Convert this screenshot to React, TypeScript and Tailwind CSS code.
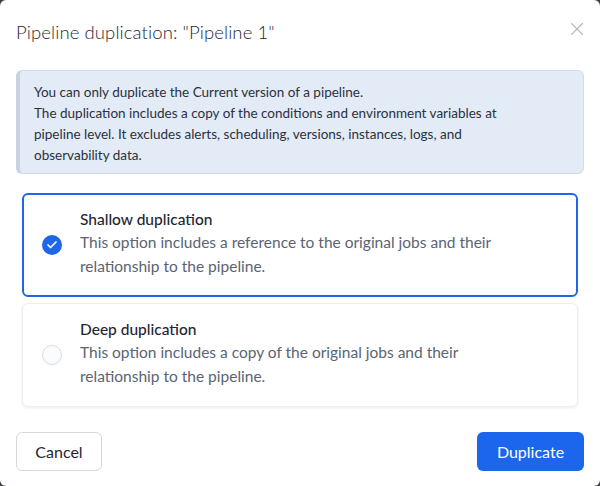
import { X, Check } from "lucide-react"

const options = [
  {
    title: "Shallow duplication",
    description: "This option includes a reference to the original jobs and their relationship to the pipeline.",
    selected: true,
  },
  {
    title: "Deep duplication",
    description: "This option includes a copy of the original jobs and their relationship to the pipeline.",
    selected: false,
  },
]

export default function App() {
  return (
    <div className="w-[600px] h-[486px] bg-[#3a3f47]" style={{ fontFamily: "Lato, 'Noto Sans', sans-serif" }}>
      <div className="w-full h-full bg-white rounded-md px-4 flex flex-col">
        <div className="flex items-center justify-between h-[62px] pt-1">
          <h1 className="text-[18.5px] font-light text-[#1f2633] tracking-[0.1px]">Pipeline duplication: "Pipeline 1"</h1>
          <X className="w-[22px] h-[22px] text-[#b5b9c0] -mr-1 -mt-2" strokeWidth={1.2} />
        </div>

        <div className="mt-[8px] h-[104px] rounded-md bg-[#e3ebf7] border border-[#d3dcea] border-l-4 border-l-[#c8d2e0] pl-[14px] pr-4 pt-[11px] text-[13.5px] leading-[21px] text-[#2a3140]">
          <div className="w-[480px]">
            You can only duplicate the Current version of a pipeline.
            <br />
            The duplication includes a copy of the conditions and environment variables at pipeline level. It excludes alerts, scheduling, versions, instances, logs, and observability data.
          </div>
        </div>

        <div className="mt-[19px] mx-[6px] flex flex-col gap-[6px]">
          {options.map((o) => (
            <div
              key={o.title}
              className={
                o.selected
                  ? "h-[104px] rounded-md border-2 border-[#1f67e8] flex items-center pl-[18px] pr-4"
                  : "h-[104px] rounded-md border border-[#eceef1] shadow-[0_1px_3px_rgba(0,0,0,0.08)] flex items-center pl-[19px] pr-4"
              }
            >
              {o.selected ? (
                <div className="w-[20px] h-[20px] rounded-full bg-[#1f67e8] flex items-center justify-center shrink-0">
                  <Check className="w-[12px] h-[12px] text-white" strokeWidth={3.5} />
                </div>
              ) : (
                <div className="w-[20px] h-[20px] rounded-full border border-[#d7dbe1] bg-[#fbfcfd] shrink-0" />
              )}
              <div className="ml-[18px] -mt-[4px]">
                <div className="text-[15.5px] font-medium text-[#1f2633] leading-[22px]">{o.title}</div>
                <div className="text-[15.5px] font-normal text-[#5b6473] leading-[24px] w-[455px]">{o.description}</div>
              </div>
            </div>
          ))}
        </div>

        <div className="mt-[25px] flex justify-between">
          <button className="w-[86px] h-[39px] rounded-md border border-[#d5d9df] bg-white text-[16px] text-[#1f2633]">Cancel</button>
          <button className="w-[107px] h-[39px] rounded-md bg-[#1b66ec] text-[16px] text-white">Duplicate</button>
        </div>
      </div>
    </div>
  )
}
